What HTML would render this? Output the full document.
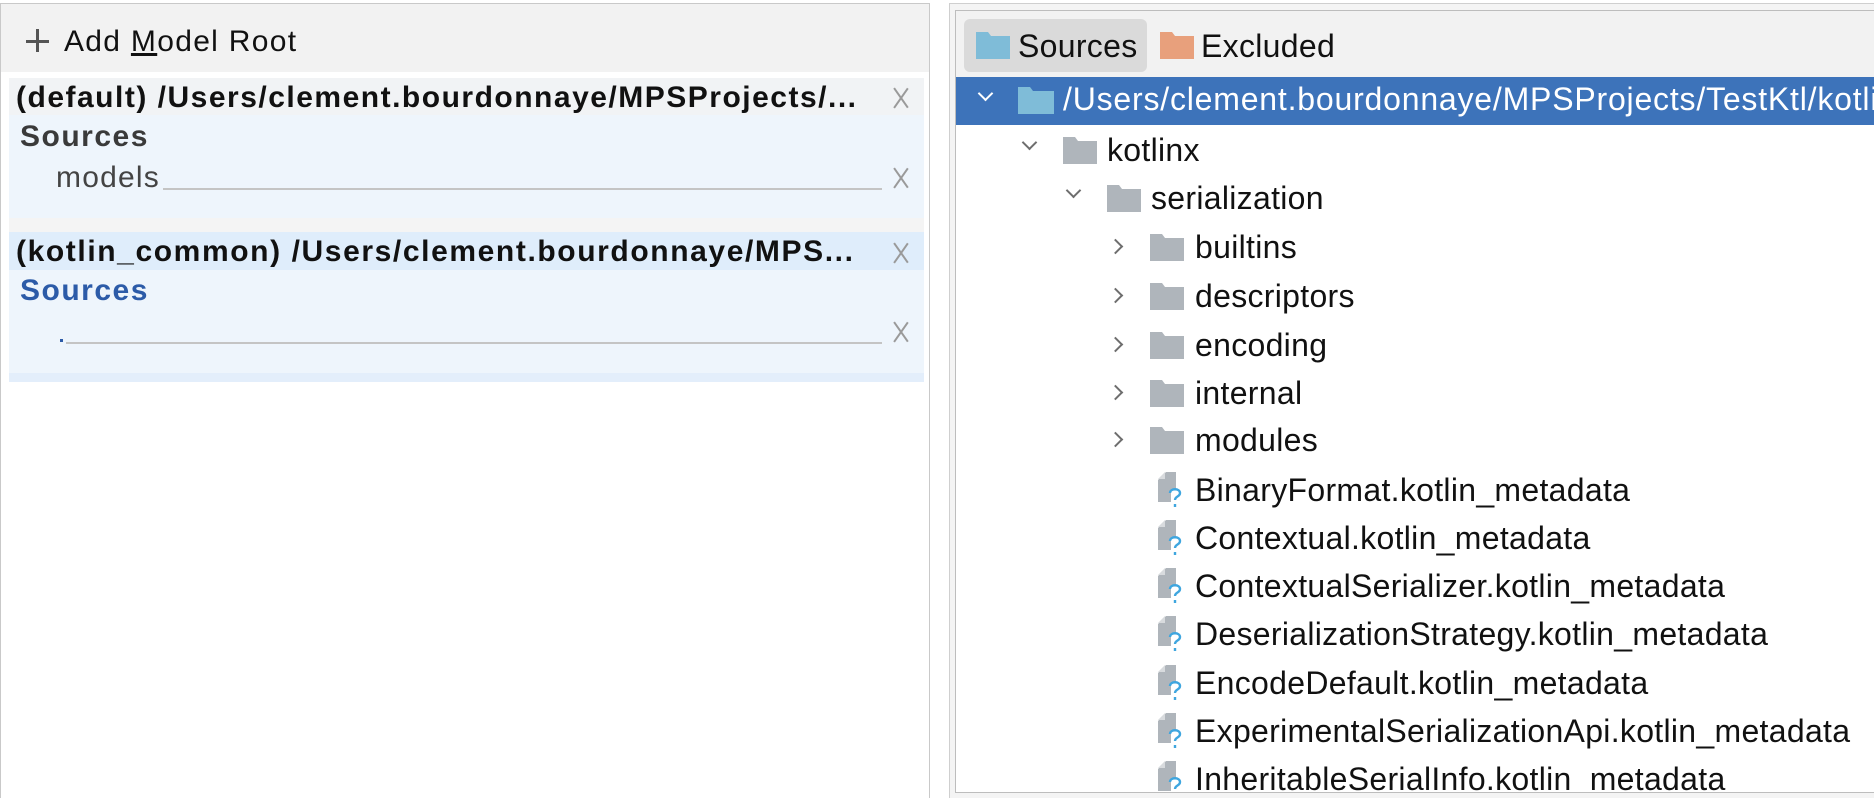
<!DOCTYPE html>
<html><head><meta charset="utf-8"><style>
*{margin:0;padding:0;box-sizing:border-box}
body{width:1874px;height:798px;background:#fff;position:relative;overflow:hidden;font-family:"Liberation Sans",sans-serif;color:#111}
.a{position:absolute;white-space:nowrap}
.t{font-size:31px;line-height:48px}
.r{font-size:32px;letter-spacing:0.3px}
.x{position:absolute;width:20px;height:20px}
.x:before,.x:after{content:"";position:absolute;left:9px;top:-2px;width:1.5px;height:24px;background:#9a9a9a}
.x:before{transform:rotate(35deg)}.x:after{transform:rotate(-35deg)}
.chv{position:absolute;width:11px;height:11px;border-right:2px solid #6e6e6e;border-bottom:2px solid #6e6e6e}
.dn{transform:rotate(45deg)}.rt{transform:rotate(-45deg)}
</style></head><body>
<!-- left panel -->
<div class="a" style="left:0;top:3px;width:930px;height:795px;border:1px solid #c9c9c9;border-bottom:none"></div>
<div class="a" style="left:1px;top:4px;width:928px;height:68px;background:#f2f2f2"></div>
<div class="a" style="left:26px;top:40px;width:23px;height:3px;background:#555"></div>
<div class="a" style="left:36px;top:29px;width:3px;height:23px;background:#555"></div>
<div class="a t" style="left:64px;top:18px;font-size:30px;letter-spacing:1.3px">Add <u>M</u>odel Root</div>

<div class="a" style="left:9px;top:78px;width:915px;height:140px;background:#eef5fc"></div>
<div class="a" style="left:9px;top:78px;width:915px;height:37px;background:#f1f3f5"></div>
<div class="a t" style="left:16px;top:74px;font-weight:bold;font-size:30px;letter-spacing:1.5px;width:862px;overflow:hidden">(default) /Users/clement.bourdonnaye/MPSProjects/...</div>
<div class="x" style="left:891px;top:88px"></div>
<div class="a t" style="left:20px;top:113px;font-weight:bold;font-size:30px;letter-spacing:1.5px;color:#3a3a3a">Sources</div>
<div class="a t" style="left:56px;top:154px;font-size:30px;letter-spacing:1.2px;color:#444">models</div>
<div class="a" style="left:163px;top:188px;width:719px;height:2px;background:#c4c4c4"></div>
<div class="x" style="left:891px;top:168px"></div>
<div class="a" style="left:9px;top:218px;width:915px;height:14px;background:#f4f4f4"></div>

<div class="a" style="left:9px;top:232px;width:915px;height:150px;background:#eef5fc"></div>
<div class="a" style="left:9px;top:232px;width:915px;height:38px;background:#dfedfb"></div>
<div class="a" style="left:9px;top:373px;width:915px;height:9px;background:#e3eefb"></div>
<div class="a t" style="left:16px;top:228px;font-weight:bold;font-size:30px;letter-spacing:1.6px;width:862px;overflow:hidden">(kotlin_common) /Users/clement.bourdonnaye/MPS...</div>
<div class="x" style="left:891px;top:243px"></div>
<div class="a t" style="left:20px;top:267px;font-weight:bold;font-size:30px;letter-spacing:1.5px;color:#2c5ba8">Sources</div>
<div class="a" style="left:60px;top:339px;width:3px;height:3px;background:#2c5ba8"></div>
<div class="a" style="left:66px;top:342px;width:816px;height:2px;background:#c4c4c4"></div>
<div class="x" style="left:891px;top:322px"></div>

<!-- right panel -->
<div class="a" style="left:949px;top:3px;width:925px;height:795px;border:1px solid #cfcfcf;border-right:none;border-bottom:none;background:#f4f4f4"></div>
<div class="a" style="left:955px;top:10px;width:919px;height:783px;border:1px solid #bdbdbd;border-right:none;background:#fff"></div>
<div class="a" style="left:956px;top:11px;width:918px;height:66px;background:#f2f2f2"></div>
<div class="a" style="left:964px;top:19px;width:183px;height:53px;background:#dadada;border-radius:6px"></div>
<svg class="a" style="left:976px;top:32px" width="34" height="27"><path d="M0 0h12l3 4h19v23H0z" fill="#7fbcd8"/></svg>
<div class="a t r" style="left:1018px;top:22px">Sources</div>
<svg class="a" style="left:1160px;top:32px" width="34" height="27"><path d="M0 0h12l3 4h19v23H0z" fill="#e8a07c"/></svg>
<div class="a t r" style="left:1201px;top:22px">Excluded</div>

<div class="a" style="left:956px;top:77px;width:918px;height:48px;background:#3d73ba"></div>
<div class="chv dn" style="left:980px;top:88px;border-color:#fff"></div>
<svg class="a" style="left:1018px;top:87px" width="36" height="27"><path d="M0 0h12l3 4h21v23H0z" fill="#7fbcd8"/></svg>
<div class="a t r" style="left:1063px;top:75px;color:#fff;letter-spacing:0.8px">/Users/clement.bourdonnaye/MPSProjects/TestKtl/kotlin</div>

<div class="chv dn" style="left:1024px;top:137px"></div>
<svg class="a" style="left:1063px;top:137px" width="34" height="27"><path d="M0 0h12l3 4h19v23H0z" fill="#afb5bb"/></svg>
<div class="a t r" style="left:1107px;top:126px">kotlinx</div>
<div class="chv dn" style="left:1068px;top:185px"></div>
<svg class="a" style="left:1107px;top:185px" width="34" height="27"><path d="M0 0h12l3 4h19v23H0z" fill="#afb5bb"/></svg>
<div class="a t r" style="left:1151px;top:174px">serialization</div>

<div class="chv rt" style="left:1110px;top:241px"></div>
<svg class="a" style="left:1150px;top:234px" width="34" height="27"><path d="M0 0h12l3 4h19v23H0z" fill="#afb5bb"/></svg>
<div class="a t r" style="left:1195px;top:223px">builtins</div>
<div class="chv rt" style="left:1110px;top:290px"></div>
<svg class="a" style="left:1150px;top:283px" width="34" height="27"><path d="M0 0h12l3 4h19v23H0z" fill="#afb5bb"/></svg>
<div class="a t r" style="left:1195px;top:272px">descriptors</div>
<div class="chv rt" style="left:1110px;top:339px"></div>
<svg class="a" style="left:1150px;top:332px" width="34" height="27"><path d="M0 0h12l3 4h19v23H0z" fill="#afb5bb"/></svg>
<div class="a t r" style="left:1195px;top:321px">encoding</div>
<div class="chv rt" style="left:1110px;top:387px"></div>
<svg class="a" style="left:1150px;top:380px" width="34" height="27"><path d="M0 0h12l3 4h19v23H0z" fill="#afb5bb"/></svg>
<div class="a t r" style="left:1195px;top:369px">internal</div>
<div class="chv rt" style="left:1110px;top:434px"></div>
<svg class="a" style="left:1150px;top:427px" width="34" height="27"><path d="M0 0h12l3 4h19v23H0z" fill="#afb5bb"/></svg>
<div class="a t r" style="left:1195px;top:416px">modules</div>

<svg width="0" height="0" style="position:absolute"><defs><g id="f"><path d="M8 0h10v18h-5v12H0V8z" fill="#afb5bb"/><path d="M0 7h7V0z" fill="#d8dbde"/><path d="M12 21c0-5 10-5 10 0c0 4-5 3-5 7M17 32v3" stroke="#3fa6df" stroke-width="2.4" fill="none"/></g></defs></svg>
<svg class="a" style="left:1158px;top:472px" width="25" height="37"><use href="#f"/></svg>
<div class="a t r" style="left:1195px;top:466px">BinaryFormat.kotlin_metadata</div>
<svg class="a" style="left:1158px;top:520px" width="25" height="37"><use href="#f"/></svg>
<div class="a t r" style="left:1195px;top:514px">Contextual.kotlin_metadata</div>
<svg class="a" style="left:1158px;top:568px" width="25" height="37"><use href="#f"/></svg>
<div class="a t r" style="left:1195px;top:562px">ContextualSerializer.kotlin_metadata</div>
<svg class="a" style="left:1158px;top:616px" width="25" height="37"><use href="#f"/></svg>
<div class="a t r" style="left:1195px;top:610px">DeserializationStrategy.kotlin_metadata</div>
<svg class="a" style="left:1158px;top:665px" width="25" height="37"><use href="#f"/></svg>
<div class="a t r" style="left:1195px;top:659px">EncodeDefault.kotlin_metadata</div>
<svg class="a" style="left:1158px;top:713px" width="25" height="37"><use href="#f"/></svg>
<div class="a t r" style="left:1195px;top:707px">ExperimentalSerializationApi.kotlin_metadata</div>
<svg class="a" style="left:1158px;top:761px" width="25" height="31"><use href="#f"/></svg>
<div class="a r" style="left:1195px;top:755px;line-height:48px;height:37px;overflow:hidden">InheritableSerialInfo.kotlin_metadata</div>
<div class="a" style="left:955px;top:792px;width:919px;height:6px;background:#f4f4f4;border-top:1px solid #bdbdbd"></div>
</body></html>
